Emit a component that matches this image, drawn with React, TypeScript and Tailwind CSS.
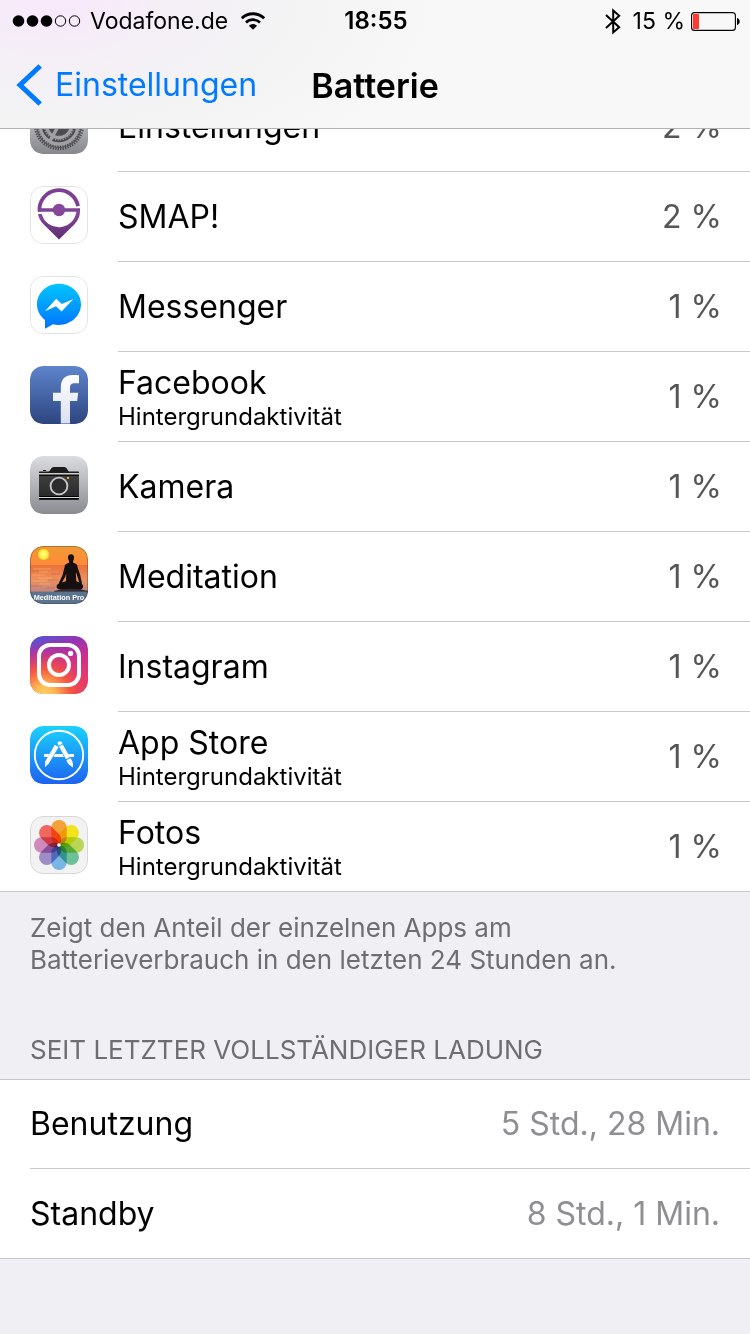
import type { ReactNode } from "react";

function Tile({ children }: { children: ReactNode }) {
  return (
    <svg viewBox="0 0 58 58" className="size-[58px] rounded-[13px]" aria-hidden="true">
      {children}
    </svg>
  );
}

function Outline() {
  return <rect x="0.5" y="0.5" width="57" height="57" rx="12.5" fill="none" stroke="#000" strokeOpacity="0.11" />;
}

function SettingsIcon() {
  return (
    <Tile>
      <defs>
        <linearGradient id="settings-bg" x1="0" y1="0" x2="0" y2="1">
          <stop offset="0" stopColor="#dcdde1" />
          <stop offset="1" stopColor="#87888d" />
        </linearGradient>
      </defs>
      <rect width="58" height="58" rx="13" fill="url(#settings-bg)" />
      <circle cx="29" cy="29" r="23" fill="#4c4c4f" />
      <circle cx="29" cy="29" r="24" fill="none" stroke="#4c4c4f" strokeWidth="2.4" strokeDasharray="1.3 1.2" />
      <circle cx="29" cy="29" r="19" fill="none" stroke="#a0a1a5" strokeWidth="3.4" />
      <circle cx="29" cy="29" r="21.3" fill="none" stroke="#98999d" strokeWidth="1.5" strokeDasharray="1.2 1.3" />
      <circle cx="29" cy="29" r="12.5" fill="none" stroke="#a0a1a5" strokeWidth="3.4" />
      <circle cx="29" cy="29" r="14.8" fill="none" stroke="#98999d" strokeWidth="1.4" strokeDasharray="1.2 1.4" />
      <path d="M29 29H48M29 29L19.5 45.5M29 29L19.5 12.5" stroke="#a0a1a5" strokeWidth="3.4" />
    </Tile>
  );
}

function SmapIcon() {
  return (
    <Tile>
      <defs>
        <linearGradient id="smap-pin" x1="0" y1="0" x2="0" y2="1">
          <stop offset="0" stopColor="#8a4aa0" />
          <stop offset="1" stopColor="#5b2f70" />
        </linearGradient>
      </defs>
      <rect width="58" height="58" rx="13" fill="#fff" />
      <path d="M48 20.2A19.4 19.4 0 0 0 9.6 25.6" fill="none" stroke="#7c3f93" strokeWidth="3.8" />
      <path d="M8 22.2H50V25.8H8Z" fill="#7f4496" />
      <circle cx="29" cy="24" r="6.2" fill="#85489b" />
      <path
        d="M8 28H11.8A17.6 17.6 0 0 0 46.4 25H50Q50 32.5 44.5 38.2L29 53.4L13.5 38.2Q9 33.8 8 28Z"
        fill="url(#smap-pin)"
      />
      <Outline />
    </Tile>
  );
}

function MessengerIcon() {
  return (
    <Tile>
      <defs>
        <linearGradient id="messenger" x1="0" y1="0" x2="0" y2="1">
          <stop offset="0" stopColor="#00c6ff" />
          <stop offset="1" stopColor="#0072ff" />
        </linearGradient>
      </defs>
      <rect width="58" height="58" rx="13" fill="#fff" />
      <path
        d="M29 7.7C16.8 7.7 7 16.9 7 28.3C7 34.8 10 40.2 15 43.9V52.7L22.9 48.2C24.8 48.7 26.9 48.9 29 48.9C41.2 48.9 51 39.7 51 28.3S41.2 7.7 29 7.7Z"
        fill="url(#messenger)"
      />
      <path d="M15 35.2L26.2 22.8L31.8 28L43.4 23L31.6 35.5L26 30.2Z" fill="#fff" />
      <Outline />
    </Tile>
  );
}

function FacebookIcon() {
  return (
    <Tile>
      <defs>
        <linearGradient id="facebook-bg" x1="0" y1="0" x2="0" y2="1">
          <stop offset="0" stopColor="#5e85cc" />
          <stop offset="1" stopColor="#2d4580" />
        </linearGradient>
        <linearGradient id="facebook-f" x1="0" y1="0" x2="0" y2="1">
          <stop offset="0" stopColor="#fff" />
          <stop offset="1" stopColor="#d9e0f0" />
        </linearGradient>
      </defs>
      <rect width="58" height="58" rx="13" fill="url(#facebook-bg)" />
      <path
        d="M30.8 57.5V35H23V26.8H30.8V21.2C30.8 13 35.4 8.9 42.6 8.9C45.6 8.9 47.6 9 49 9.2V17.2H44.8C41 17.2 40 18.9 40 22V26.8H48.2L47.2 35H40V57.5Z"
        fill="url(#facebook-f)"
      />
    </Tile>
  );
}

function CameraIcon() {
  return (
    <Tile>
      <defs>
        <linearGradient id="camera-bg" x1="0" y1="0" x2="0" y2="1">
          <stop offset="0" stopColor="#dcdde0" />
          <stop offset="1" stopColor="#898b91" />
        </linearGradient>
        <linearGradient id="camera-body" x1="0" y1="0" x2="0" y2="1">
          <stop offset="0" stopColor="#404040" />
          <stop offset="1" stopColor="#262626" />
        </linearGradient>
      </defs>
      <rect width="58" height="58" rx="13" fill="url(#camera-bg)" />
      <rect x="13" y="14" width="3" height="1" fill="#111" />
      <path d="M9 17.3V16.3Q9 15.6 9.8 15.6H18.6C20.6 15.2 20.6 11 24 11H34C37.4 11 37.4 15.2 39.4 15.6H48.2Q49 15.6 49 16.3V17.3Z" fill="#1c1c1c" />
      <rect x="9" y="17.3" width="40" height="1.2" fill="#e4e4e6" />
      <path d="M9 18.5H49V43Q49 44 48 44H10Q9 44 9 43Z" fill="url(#camera-body)" />
      <path d="M9 19.3H49M9 40.5H49M9 42.6H49" stroke="#000" strokeWidth="1" />
      <path d="M9 41.5H49" stroke="#d5d6d9" strokeWidth="1" />
      <circle cx="29" cy="30" r="8.4" fill="#2b2b2b" stroke="#c3c4c8" strokeWidth="1.9" />
      <rect x="37" y="21" width="2" height="2" fill="#e8ae1b" />
    </Tile>
  );
}

function MeditationIcon() {
  return (
    <Tile>
      <defs>
        <linearGradient id="med-sky" x1="0" y1="0" x2="0" y2="1">
          <stop offset="0" stopColor="#f09a35" />
          <stop offset="1" stopColor="#ff8a3a" />
        </linearGradient>
        <linearGradient id="med-sea" x1="0" y1="0" x2="0" y2="1">
          <stop offset="0" stopColor="#e9713a" />
          <stop offset="0.5" stopColor="#ef8f5c" />
          <stop offset="1" stopColor="#bd8480" />
        </linearGradient>
        <radialGradient id="med-sun">
          <stop offset="0" stopColor="#ffff90" />
          <stop offset="0.75" stopColor="#ffec3c" />
          <stop offset="1" stopColor="#ffbd2e" />
        </radialGradient>
        <clipPath id="med-clip">
          <rect width="58" height="58" rx="13" />
        </clipPath>
      </defs>
      <g clipPath="url(#med-clip)">
        <rect width="58" height="20" fill="url(#med-sky)" />
        <rect y="19" width="58" height="28" fill="url(#med-sea)" />
        <path d="M4 23H21M9 26H18M2 29H15M8 32H22M3 35H17M9 38H20" stroke="#ffc06d" strokeOpacity="0.55" strokeWidth="1" />
        <path d="M1 25H9M21 28H30M18 34H28M1 40H12M16 42H25" stroke="#a95952" strokeOpacity="0.4" strokeWidth="1" />
        <circle cx="13.6" cy="8.4" r="5.7" fill="url(#med-sun)" />
        <g fill="#15100f">
          <path d="M41 8.2C38.6 8.2 37.8 10 38 12C38.2 14 39.2 14.8 39.2 16.4C37.2 17.4 35.4 17.6 34.8 19.8L36.2 28L35.8 38H46.6L45.8 28L47.4 19.8C46.8 17.6 45.2 17.4 43 16.4C43 14.8 43.9 14 44.1 12C44.2 10 43.4 8.2 41 8.2Z" />
          <path d="M35 19.4L37.6 21.4L35.4 30.4L30.8 38.4L28.6 37.6L32.4 29.6Z" />
          <path d="M46.8 19L44.8 21.6L47.2 30L50 38.4L52 37.4L50.2 29Z" />
          <path d="M36 35.2C32 36.2 28.8 37 27.2 38.8C25.6 41.2 27.2 43.2 30 43.6L41 45L50 44C53.6 43 54 39.6 52 38C50.4 36.4 48.4 36 46 35.2Z" />
        </g>
        <path d="M24 45Q36 42 46 43Q53 43.4 58 45V47H24Z" fill="#342a33" />
        <rect y="45.6" width="58" height="13" fill="#5c738d" />
        <text x="29" y="53.8" textAnchor="middle" fontSize="7.3" fontWeight="700" fontFamily="Liberation Sans, Arial, sans-serif" fill="#fff">
          Meditation Pro
        </text>
      </g>
      <rect x="0.5" y="0.5" width="57" height="57" rx="12.5" fill="none" stroke="#2c3038" strokeOpacity="0.35" />
    </Tile>
  );
}

function InstagramIcon() {
  return (
    <Tile>
      <defs>
        <linearGradient id="ig-base" x1="0" y1="0" x2="0.35" y2="1">
          <stop offset="0" stopColor="#4a5bd6" />
          <stop offset="0.3" stopColor="#9334b4" />
          <stop offset="0.65" stopColor="#d62e86" />
          <stop offset="1" stopColor="#e83d62" />
        </linearGradient>
        <radialGradient id="ig-glow" cx="0.25" cy="1.02" r="0.9">
          <stop offset="0" stopColor="#ffd567" />
          <stop offset="0.2" stopColor="#fdb853" />
          <stop offset="0.5" stopColor="#f6573f" />
          <stop offset="1" stopColor="#d62e86" stopOpacity="0" />
        </radialGradient>
      </defs>
      <rect width="58" height="58" rx="13" fill="url(#ig-base)" />
      <rect width="58" height="58" rx="13" fill="url(#ig-glow)" />
      <rect x="9" y="9" width="40" height="40" rx="11" fill="none" stroke="#fff" strokeWidth="4" />
      <circle cx="29" cy="29" r="10" fill="none" stroke="#fff" strokeWidth="4" />
      <circle cx="40.6" cy="17.4" r="2.6" fill="#fff" />
    </Tile>
  );
}

function AppStoreIcon() {
  return (
    <Tile>
      <defs>
        <linearGradient id="store-bg" x1="0" y1="0" x2="0" y2="1">
          <stop offset="0" stopColor="#1bd2fd" />
          <stop offset="1" stopColor="#1d62f0" />
        </linearGradient>
      </defs>
      <rect width="58" height="58" rx="13" fill="url(#store-bg)" />
      <circle cx="29" cy="29" r="24.2" fill="none" stroke="#fff" strokeWidth="1.9" />
      <path d="M14 28H19.4L17.8 31H14ZM25 28H32.4L34 31H23.4ZM38 28H44V31H39.6Z" fill="#fff" />
      <path d="M24.8 18.8L28.6 21L18.8 37.6L15 41.2L15.2 35.4Z" fill="#fff" />
      <path d="M27.4 17Q29 14 31.4 15.8L32.4 17.6L28.8 19.8Z" fill="#fff" />
      <path d="M29 20.6L32.8 18.4L39.8 31L36 33.2Z" fill="#fff" />
      <path d="M36.4 34.2L40.4 32Q43.4 35.6 43 41.4Q37.6 38.8 36.4 34.2Z" fill="#fff" />
    </Tile>
  );
}

const petals = [
  { angle: 0, color: "#ffab3c" },
  { angle: 45, color: "#fff020" },
  { angle: 90, color: "#c3e25c" },
  { angle: 135, color: "#72cba0" },
  { angle: 180, color: "#7dc0f2" },
  { angle: 225, color: "#a794d2" },
  { angle: 270, color: "#dc90c6" },
  { angle: 315, color: "#ff6c62" },
];

function PhotosIcon() {
  return (
    <Tile>
      <rect width="58" height="58" rx="13" fill="#f2f2f2" />
      {petals.map((p) => (
        <rect
          key={p.angle}
          x="21.3"
          y="4"
          width="15.4"
          height="25"
          rx="7.6"
          fill={p.color}
          transform={`rotate(${p.angle} 29 29)`}
          className="mix-blend-multiply"
        />
      ))}
      <circle cx="29" cy="29" r="1.8" fill="#fff" />
      <Outline />
    </Tile>
  );
}

const apps: { name: string; note?: string; share: string; icon: ReactNode }[] = [
  { name: "Einstellungen", share: "2 %", icon: <SettingsIcon /> },
  { name: "SMAP!", share: "2 %", icon: <SmapIcon /> },
  { name: "Messenger", share: "1 %", icon: <MessengerIcon /> },
  { name: "Facebook", note: "Hintergrundaktivität", share: "1 %", icon: <FacebookIcon /> },
  { name: "Kamera", share: "1 %", icon: <CameraIcon /> },
  { name: "Meditation", share: "1 %", icon: <MeditationIcon /> },
  { name: "Instagram", share: "1 %", icon: <InstagramIcon /> },
  { name: "App Store", note: "Hintergrundaktivität", share: "1 %", icon: <AppStoreIcon /> },
  { name: "Fotos", note: "Hintergrundaktivität", share: "1 %", icon: <PhotosIcon /> },
];

function StatusBar() {
  return (
    <div className="grid h-[42px] grid-cols-[1fr_auto_1fr] items-center pr-2.5 pl-3 text-[23px]">
      <div className="flex items-center">
        <svg viewBox="0 0 70 14" className="h-3.5 w-[70px]" aria-hidden="true">
          <circle cx="6.5" cy="7" r="5.8" />
          <circle cx="20.5" cy="7" r="5.8" />
          <circle cx="34.5" cy="7" r="5.8" />
          <circle cx="48.5" cy="7" r="5.2" fill="none" stroke="#000" strokeWidth="1" />
          <circle cx="62.5" cy="7" r="5.2" fill="none" stroke="#000" strokeWidth="1" />
        </svg>
        <span className="ml-2">Vodafone.de</span>
        <svg viewBox="0 0 26 18" className="ml-3 h-[18px] w-[26px]" aria-hidden="true">
          <path d="M1.8 6.3A16 16 0 0 1 24.2 6.3" fill="none" stroke="#000" strokeWidth="2.8" />
          <path d="M6 10.5A10 10 0 0 1 20 10.5" fill="none" stroke="#000" strokeWidth="2.6" />
          <path d="M13 17.8L8.9 13.8A5.8 5.8 0 0 1 17.1 13.8Z" />
        </svg>
      </div>
      <time className="text-[24px] font-semibold">18:55</time>
      <div className="flex items-center justify-end">
        <svg viewBox="0 0 16 27" className="mr-3 h-[27px] w-4" aria-hidden="true">
          <path d="M1 7L14.2 19.2L8.2 24.4V2.4L14.2 7.8L1 20" fill="none" stroke="#000" strokeWidth="2" />
        </svg>
        <span>15 %</span>
        <svg viewBox="0 0 49 19" className="ml-1.5 h-[19px] w-[49px]" aria-hidden="true">
          <rect x="0.6" y="0.6" width="43.8" height="17.8" rx="3" fill="none" stroke="#000" strokeWidth="1.1" />
          <rect x="2" y="2" width="6" height="15" rx="0.8" fill="#ff3b30" />
          <path d="M46 6C49.6 6.8 49.6 12.2 46 13Z" />
        </svg>
      </div>
    </div>
  );
}

export default function App() {
  return (
    <div className="min-h-screen bg-[#efeff4] font-['Inter','Liberation_Sans',sans-serif] text-black">
      <header className="sticky top-0 z-10 border-b border-[#b2b2b2] bg-[#f8f8f8] bg-[radial-gradient(ellipse_400px_200px_at_50px_0px,#f8e8fb,#f4f0f6_35%,#f3f3f4_60%,#f8f8f8)]">
        <StatusBar />
        <nav className="grid h-[86px] grid-cols-[1fr_auto_1fr] items-center px-4">
          <a href="#einstellungen" className="flex items-center text-[32px] text-[#007aff]">
            <svg viewBox="0 0 27 42" className="mr-3 h-[42px] w-[27px]" aria-hidden="true">
              <path d="M24.2 2L4 21L24.2 40" fill="none" stroke="#007aff" strokeWidth="5" />
            </svg>
            Einstellungen
          </a>
          <h1 className="text-[34px] font-semibold">Batterie</h1>
        </nav>
      </header>

      <main>
        <ul className="-mt-[47px] border-b border-[#c8c7cc] bg-white">
          {apps.map((app) => (
            <li key={app.name} className="group flex pl-[30px]">
              <div className="w-[88px] shrink-0 pt-3.5">{app.icon}</div>
              <div className="flex h-[90px] flex-1 items-center justify-between border-b border-[#c8c7cc] pr-7 group-last:h-[89px] group-last:border-b-0">
                <div>
                  <div className="text-[32px] leading-10">{app.name}</div>
                  {app.note && <div className="text-[24px] leading-7">{app.note}</div>}
                </div>
                <div className="text-[32px] leading-10 text-[#555]">{app.share}</div>
              </div>
            </li>
          ))}
        </ul>
        <p className="max-w-[660px] px-[30px] pt-5 text-[26px] leading-8 text-[#6d6d72]">
          Zeigt den Anteil der einzelnen Apps am Batterieverbrauch in den letzten 24 Stunden an.
        </p>

        <h2 className="px-[30px] pt-[58px] pb-[13px] text-[26px] leading-8 text-[#6d6d72] uppercase">
          Seit letzter vollständiger Ladung
        </h2>
        <dl className="border-y border-[#c8c7cc] bg-white pl-[30px] text-[32px]">
          <div className="flex h-[89px] items-center justify-between border-b border-[#c8c7cc] pr-[30px]">
            <dt>Benutzung</dt>
            <dd className="text-[#8e8e93]">5 Std., 28 Min.</dd>
          </div>
          <div className="flex h-[89px] items-center justify-between pr-[30px]">
            <dt>Standby</dt>
            <dd className="text-[#8e8e93]">8 Std., 1 Min.</dd>
          </div>
        </dl>
      </main>
    </div>
  );
}
